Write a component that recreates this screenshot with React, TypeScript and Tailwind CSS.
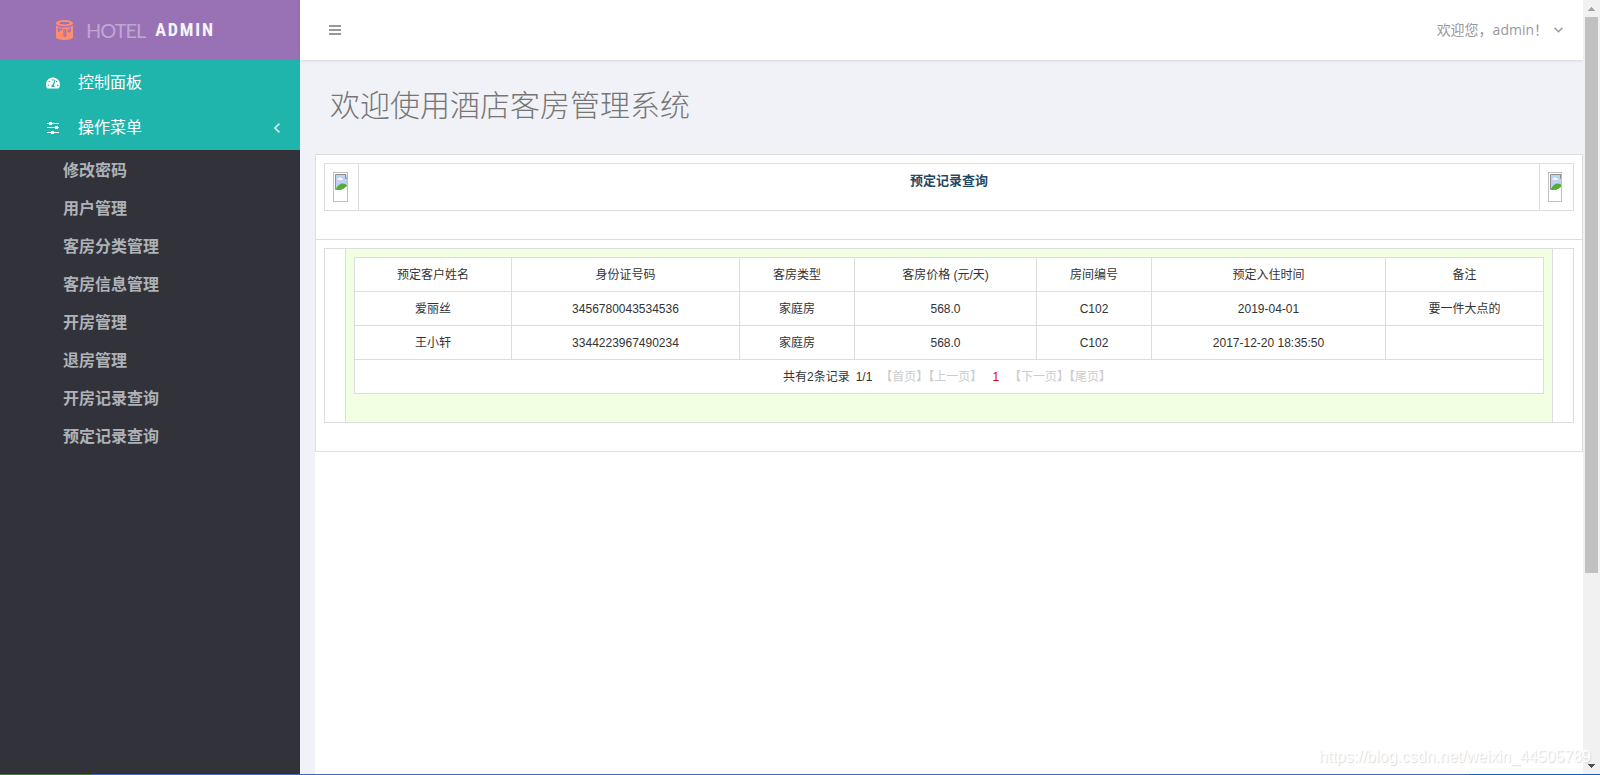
import React from "react";
import { FaTachometerAlt } from "react-icons/fa";

const menuItems = [
  "修改密码",
  "用户管理",
  "客房分类管理",
  "客房信息管理",
  "开房管理",
  "退房管理",
  "开房记录查询",
  "预定记录查询",
];

const headings = ["预定客户姓名", "身份证号码", "客房类型", "客房价格 (元/天)", "房间编号", "预定入住时间", "备注"];

const bookings = [
  ["爱丽丝", "3456780043534536", "家庭房", "568.0", "C102", "2019-04-01", "要一件大点的"],
  ["王小轩", "3344223967490234", "家庭房", "568.0", "C102", "2017-12-20 18:35:50", ""],
];

function PaintIcon() {
  return (
    <svg className="h-5 w-[18px]" viewBox="0 0 18 20" aria-hidden="true">
      <path
        fill="#ff8c6e"
        fillRule="evenodd"
        d="M8.500 0c4.700 0 8.500 1.400 8.500 3.200S13.200 6.300 8.500 6.300 0 5 0 3.200 3.800 0 8.500 0zM8.500 2C5.500 2 3.200 2.500 3.200 3.200s2.300 1.200 5.300 1.200 5.300-.5 5.300-1.200S11.500 2 8.500 2z"
      />
      <path fill="#ff8c6e" d="M0 5.200C1.500 6.700 5 7.500 8.500 7.500S15.500 6.700 17 5.200V17c0 1.800-3.800 3-8.500 3S0 18.800 0 17z" />
      <path
        fill="none"
        stroke="#9972b5"
        strokeWidth="1.200"
        strokeLinecap="round"
        strokeLinejoin="round"
        d="M2.300 8v2.500c0 1 1.600 1 1.600 0V9.700c0-1 1.800-1 1.800 0M8 9.500v6c0 1 1.700 1 1.700 0v-6M12.200 9.700v1.500c0 1 2 1 2 0V8"
      />
    </svg>
  );
}

function SlidersIcon() {
  return (
    <svg className="h-3 w-3" viewBox="0 0 12 12" fill="#fff" aria-hidden="true">
      <path d="M0 1h12v1H0zM0 5h12v1H0zM0 10h12v1H0z" />
      <path d="M2 0h3v3H2zM8 4h3v3H8zM4 9h3v3H4z" />
    </svg>
  );
}

function BrokenImage({ label, narrow = false }: { label: string; narrow?: boolean }) {
  return (
    <svg
      className={narrow ? "h-[30px] w-[14px]" : "h-[30px] w-[15px]"}
      viewBox={narrow ? "0 0 14 30" : "0 0 15 30"}
      role="img"
      aria-label={label}
    >
      <path fill="#c0d2f2" d="M3 3h11v14H3z" />
      <path fill="#fff" d="M4 7.500c0-1 1-1 1.500-1 .5-1.500 2.500-1.500 3 0 1 0 1.500.5 1.500 1.500z" />
      <path fill="#55aa3c" d="M3 17c1-3 4-5.500 6.500-5.500 2 0 3.500.8 4.500 2V17z" />
      <path fill="#fff" d="M9 18l5-4v4z" />
      <path fill="none" stroke="#8d8f91" d="M9 17.500H2.500v-15H13M12.500 3v3.500H14" />
      <rect x="0.500" y="0.500" width={narrow ? 13 : 14} height="29" fill="none" stroke="#c0c0c0" />
    </svg>
  );
}

function Sidebar() {
  return (
    <aside className="flex w-[300px] shrink-0 flex-col bg-[#32323a]">
      <a href="#home" className="flex h-[60px] items-center bg-[#9972b5] pl-14">
        <PaintIcon />
        <span className="ml-3 font-['Lato'] text-xl tracking-tighter text-white/40">HOTEL</span>
        <span className="ml-2.5 font-['Roboto_Condensed','Roboto',sans-serif] text-lg font-bold tracking-widest text-[#f4f4f8]">
          ADMIN
        </span>
      </a>
      <nav className="text-base">
        <div className="bg-[#1fb5ad] text-white">
          <a href="#dashboard" className="flex h-[45px] items-center pt-px pl-[46px]">
            <span className="w-8">
              <FaTachometerAlt className="size-[14px]" />
            </span>
            控制面板
          </a>
          <button type="button" className="flex h-[45px] w-full items-center pt-px pr-5 pl-[47px]">
            <span className="w-[31px]">
              <SlidersIcon />
            </span>
            操作菜单
            <svg className="ml-auto h-[10px] w-[6px]" viewBox="0 0 6 10" fill="none" stroke="#d8f2f0" strokeWidth="1.700" aria-hidden="true">
              <path d="M5.400 0.600L1 5l4.400 4.400" />
            </svg>
          </button>
        </div>
        <ul className="pt-0.5 font-bold text-[#aeb2b7]">
          {menuItems.map((item) => (
            <li key={item}>
              <a href={`#${item}`} className="flex h-[38px] items-center pl-[63px]">
                {item}
              </a>
            </li>
          ))}
        </ul>
      </nav>
    </aside>
  );
}

function BookingTable() {
  return (
    <table className="w-full table-fixed border-collapse bg-white text-center text-xs leading-4 text-[#333]">
      <colgroup>
        <col className="w-[157px]" />
        <col className="w-[228px]" />
        <col className="w-[115px]" />
        <col className="w-[182px]" />
        <col className="w-[115px]" />
        <col className="w-[234px]" />
        <col className="w-[158px]" />
      </colgroup>
      <thead>
        <tr className="h-[34px]">
          {headings.map((heading) => (
            <th key={heading} scope="col" className="border border-[#ddd] px-2 pt-[9px] pb-2 font-normal">
              {heading}
            </th>
          ))}
        </tr>
      </thead>
      <tbody>
        {bookings.map((row) => (
          <tr key={row[1]} className="h-[34px]">
            {row.map((value, index) => (
              <td key={index} className="border border-[#ddd] px-2 pt-[9px] pb-2">
                {value}
              </td>
            ))}
          </tr>
        ))}
      </tbody>
      <tfoot>
        <tr className="h-[34px]">
          <td colSpan={7} className="border border-[#ddd] px-2 pt-[9px] pb-2">
            <div className="flex justify-center pr-1">
              <span>共有2条记录</span>
              <span className="ml-1.5">1/1</span>
              <span className="ml-2 text-[#ccc]">【首页】【上一页】</span>
              <span className="mx-2.5 text-[#e60000]">1</span>
              <span className="text-[#ccc]">【下一页】【尾页】</span>
            </div>
          </td>
        </tr>
      </tfoot>
    </table>
  );
}

function Scrollbar() {
  return (
    <div className="flex w-[17px] shrink-0 flex-col items-center bg-[#f1f1f1]" aria-hidden="true">
      <div className="flex h-[17px] items-center">
        <svg className="h-1 w-[7px]" viewBox="0 0 7 4" fill="#a3a3a3">
          <path d="M3 0h1v1h1v1h1v1h1v1H0V3h1V2h1V1h1z" />
        </svg>
      </div>
      <div className="w-[13px] grow-[556] bg-[#c1c1c1]" />
      <div className="grow-[184]" />
      <div className="flex h-[17px] items-center">
        <svg className="h-1 w-[7px]" viewBox="0 0 7 4" fill="#505050">
          <path d="M0 0h7v1H6v1H5v1H4v1H3V3H2V2H1V1H0z" />
        </svg>
      </div>
    </div>
  );
}

export default function App() {
  return (
    <div className="relative flex min-h-screen flex-col font-['Liberation_Sans','Noto_Sans_CJK_SC',sans-serif]">
      <div className="flex grow">
        <Sidebar />
        <div className="flex min-w-0 grow flex-col bg-[#f1f2f7]">
          <header className="flex h-[60px] shrink-0 items-center justify-between bg-white pl-[29px] pr-5 text-[#98979e] shadow-[0_1px_3px_rgba(0,0,0,0.1)]">
            <button type="button" aria-label="菜单">
              <svg className="h-[10px] w-3" viewBox="0 0 12 10" fill="currentColor">
                <path d="M0 0h12v2H0zM0 4h12v2H0zM0 8h12v2H0z" />
              </svg>
            </button>
            <button type="button" className="flex items-center font-['Open_Sans','Noto_Sans_CJK_SC',sans-serif] text-sm">
              欢迎您，admin！
              <svg className="ml-1.5 h-[6px] w-[9px]" viewBox="0 0 9 6" fill="none" stroke="currentColor" strokeWidth="1.500" aria-hidden="true">
                <path d="M0.600 0.800L4.500 4.700l3.900-3.900" />
              </svg>
            </button>
          </header>
          <main className="flex grow flex-col pl-[15px]">
            <h1 className="flex h-[94px] items-center pb-0.5 pl-[15px] text-3xl font-light text-[#767676]">
              欢迎使用酒店客房管理系统
            </h1>
            <div className="grow bg-white">
              <section className="border border-[#ddd]">
                <div className="border-b border-[#ddd] p-2 pb-7">
                  <div className="flex border border-[#ddd]">
                    <div className="w-[34px] border-r border-[#ddd] p-2">
                      <BrokenImage label="左侧图片" />
                    </div>
                    <h2 className="grow pt-2 text-center text-[13px] leading-[18px] font-bold text-[#1f4a65]">预定记录查询</h2>
                    <div className="w-[34px] border-l border-[#ddd] p-2">
                      <BrokenImage label="右侧图片" narrow />
                    </div>
                  </div>
                </div>
                <div className="p-2 pb-7">
                  <div className="border border-[#ddd] px-5">
                    <div className="border-x border-[#ddd] bg-[#f3ffe3] p-2 pb-7">
                      <BookingTable />
                    </div>
                  </div>
                </div>
              </section>
            </div>
          </main>
        </div>
        <Scrollbar />
      </div>
      <div className="flex h-px" aria-hidden="true">
        <div className="w-[92px] bg-[#3a7f33]" />
        <div className="grow bg-[#3a69c0]" />
        <div className="w-[131px] bg-[#0f5ccb]" />
      </div>
      <div className="pointer-events-none absolute right-[9px] bottom-2 text-base leading-5 text-white [text-shadow:1px_1px_1px_#dadada]">
        https://blog.csdn.net/weixin_44505789
      </div>
    </div>
  );
}
